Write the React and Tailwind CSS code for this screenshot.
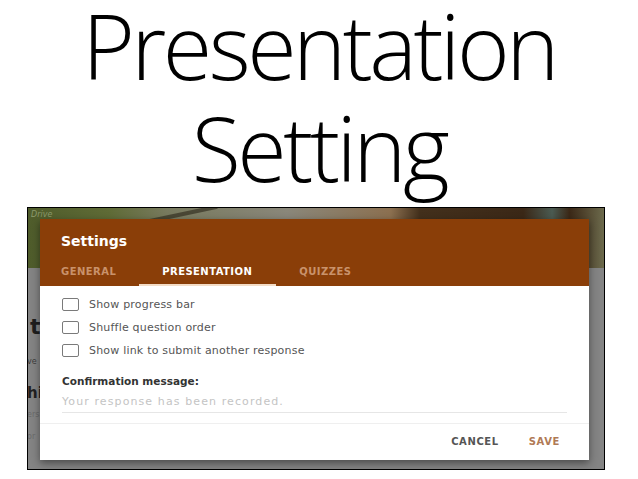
import React from "react";

function Box() {
  return <span className="block w-[17px] h-[13px] rounded-[2px] border-[1.5px] border-[#7a7a7a] bg-white shrink-0" />;
}

function Row({ label }) {
  return (
    <div className="flex items-center h-[23px]">
      <Box />
      <span className="ml-[10px] text-[11px] text-[#555] leading-none tracking-[0.2px]">{label}</span>
    </div>
  );
}

export default function App() {
  return (
    <div className="w-[638px] h-[479px] bg-white overflow-hidden">
      <div
        className="text-center text-black font-light text-[90px] leading-[90px] tracking-[-3.5px]"
        style={{ fontFamily: '"Open Sans", "Noto Sans", sans-serif' }}
      >
        <div>Presentation</div>
        <div className="mt-[12px]">Setting</div>
      </div>
      <div
        className="relative ml-[27px] mt-[15px] w-[578px] h-[263px] border border-black overflow-hidden bg-[#848484]"
        style={{ fontFamily: '"DejaVu Sans", Verdana, sans-serif' }}
      >
        {/* blurred header image of page behind */}
        <div className="absolute left-0 top-0 w-full h-[60px] bg-[linear-gradient(90deg,#4f5c2b_0%,#5f6b36_14%,#787a5e_24%,#8a877a_45%,#8c7050_63%,#43301c_68%,#3b2817_86%,#4b5b52_91%,#3b2817_94%,#6c6a4c_100%)]" />
        <div className="absolute left-[40px] top-[0px] w-[70px] h-[4px] -rotate-[12deg] bg-[#2a2418] opacity-60 translate-x-[80px] translate-y-[4px]" />
        <div className="absolute left-[3px] top-[1px] text-[8px] italic text-[#8c9a6c]">Drive</div>
        {/* page content fragments behind overlay */}
        <div className="absolute left-[2px] top-[108px] text-[22px] font-bold text-[#1e1e1e] leading-none">t</div>
        <div className="absolute left-[-1px] top-[150px] text-[8px] text-[#3c3c3c] leading-none">ve</div>
        <div className="absolute left-[-1px] top-[178px] text-[15px] font-bold text-[#222] leading-none">hi</div>
        <div className="absolute left-[-1px] top-[203px] text-[8px] text-[#6a6a6a] leading-none">ers</div>
        <div className="absolute left-[-1px] top-[225px] text-[8px] text-[#6a6a6a] leading-none">or</div>

        {/* dialog */}
        <div className="absolute left-[12px] top-[11px] w-[549px] h-[241px] bg-white shadow-[0_3px_8px_rgba(0,0,0,0.45)] flex flex-col">
          <div className="bg-[#8a3e08] h-[67px] flex flex-col">
            <div className="pl-[21px] pt-[13px] h-[39px] text-[14px] font-bold text-white leading-[18px]">Settings</div>
            <div className="flex h-[28px] text-[10px] font-bold leading-none tracking-[0.45px]">
              <div className="pl-[21px] pr-[23px] flex items-center text-[#c9926b]">GENERAL</div>
              <div className="pl-[23px] pr-[24px] flex items-center text-white border-b-2 border-[#f3dcc6] pt-[2px]">PRESENTATION</div>
              <div className="px-[23px] flex items-center text-[#c9926b]">QUIZZES</div>
            </div>
          </div>
          <div className="pl-[22px] pt-[7px] flex flex-col">
            <Row label="Show progress bar" />
            <Row label="Shuffle question order" />
            <Row label="Show link to submit another response" />
            <div className="mt-[14px] text-[10.5px] font-bold text-[#333] leading-none">Confirmation message:</div>
            <div className="mt-[9px] mr-[22px] pb-[5px] border-b border-[#e6e6e6] text-[11px] text-[#c4c4c4] leading-none tracking-[1.1px]">
              Your response has been recorded.
            </div>
          </div>
          <div className="mt-[10px] border-t border-[#efefef] flex-1 flex items-center justify-end pr-[29px] gap-[30px] text-[10px] font-bold leading-none tracking-[0.6px]">
            <span className="text-[#555]">CANCEL</span>
            <span className="text-[#b07a55]">SAVE</span>
          </div>
        </div>
      </div>
    </div>
  );
}
